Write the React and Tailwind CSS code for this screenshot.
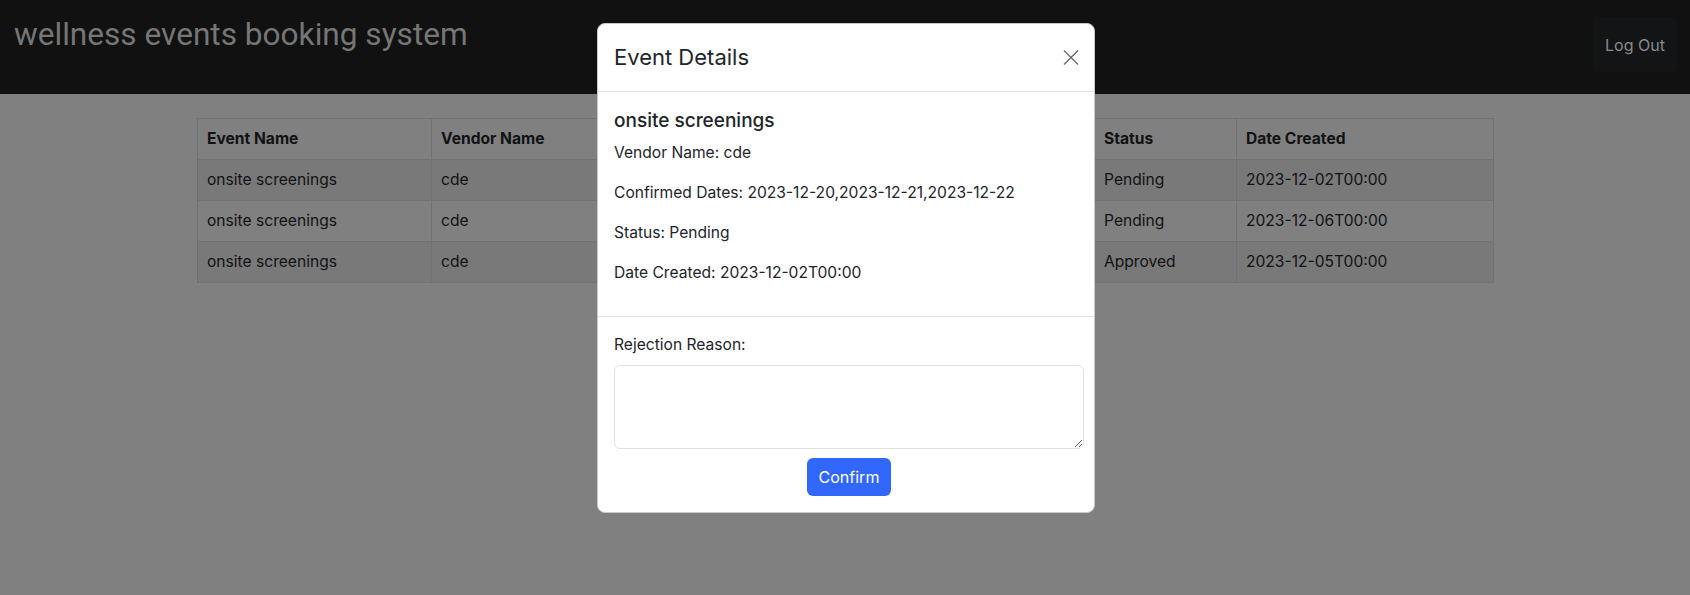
export default function App() {
  const rows = [
    ["onsite screenings", "cde", "", "", "Pending", "2023-12-02T00:00"],
    ["onsite screenings", "cde", "", "", "Pending", "2023-12-06T00:00"],
    ["onsite screenings", "cde", "", "", "Approved", "2023-12-05T00:00"],
  ];
  const heads = ["Event Name", "Vendor Name", "", "", "Status", "Date Created"];
  const widths = ["w-[234px]", "w-[221px]", "w-[221px]", "w-[221px]", "w-[142px]", "w-[257px]"];
  return (
    <div className="relative min-h-[595px] bg-[#808080] font-['Inter',sans-serif]">
      <header className="flex h-[94px] items-start justify-between bg-[#111111] pl-[14px] pr-[13px]">
        <h1 className="mt-[15px] font-['Roboto',sans-serif] text-[31.6px] leading-[40px] text-[#767676]">
          wellness events booking system
        </h1>
        <button className="mt-[17px] h-[55px] w-[84px] rounded-md bg-[#131416] text-[16px] text-[#8a8a8a]">
          Log Out
        </button>
      </header>
      <main className="mx-auto w-[1320px] px-3 pt-6">
        <table className="w-full table-fixed border-collapse text-[15.6px] leading-6 text-[#111214]">
          <thead>
            <tr>
              {heads.map((h, i) => (
                <th key={i} className={`${widths[i]} border border-[#6f7173] px-[9px] py-2 text-left font-bold`}>
                  {h}
                </th>
              ))}
            </tr>
          </thead>
          <tbody>
            {rows.map((r, ri) => (
              <tr key={ri} className={ri % 2 === 0 ? "bg-[#797979]" : "bg-[#808080]"}>
                {r.map((c, ci) => (
                  <td key={ci} className="border border-[#6f7173] px-[9px] py-2">
                    {c}
                  </td>
                ))}
              </tr>
            ))}
          </tbody>
        </table>
      </main>

      <div className="absolute left-[597px] top-[23px] w-[498px] rounded-lg border border-[#c9c9c9] bg-white text-[15.6px] text-[#212529]">
        <div className="flex items-center justify-between border-b border-[#dee2e6] px-4 py-4">
          <h5 className="text-[22px] font-normal leading-[35px]">Event Details</h5>
          <button className="mr-[-1px] flex h-4 w-4 items-center justify-center">
            <svg width="17" height="17" viewBox="0 0 16 16" fill="none" stroke="#6c6c6c" strokeWidth="1.4">
              <path d="M1 1L15 15M15 1L1 15" />
            </svg>
          </button>
        </div>
        <div className="border-b border-[#dee2e6] px-4 pb-[15px] pt-[17px]">
          <h5 className="mb-2 text-[19px] font-medium leading-6">onsite screenings</h5>
          <p className="mb-4 leading-6">Vendor Name: cde</p>
          <p className="mb-4 leading-6">Confirmed Dates: 2023-12-20,2023-12-21,2023-12-22</p>
          <p className="mb-4 leading-6">Status: Pending</p>
          <p className="mb-4 leading-6">Date Created: 2023-12-02T00:00</p>
        </div>
        <div className="px-4 pb-4 pt-4">
          <div className="flex w-[470px] flex-col items-center">
            <label className="mb-2 self-start leading-6">Rejection Reason:</label>
            <textarea className="h-[84px] w-[470px] rounded-md border border-[#dee2e6] px-3 py-1.5 outline-none"></textarea>
            <button className="mt-[9px] h-[38px] w-[84px] rounded-md bg-[#3267fe] text-[16px] text-white">
              Confirm
            </button>
          </div>
        </div>
      </div>
    </div>
  );
}
